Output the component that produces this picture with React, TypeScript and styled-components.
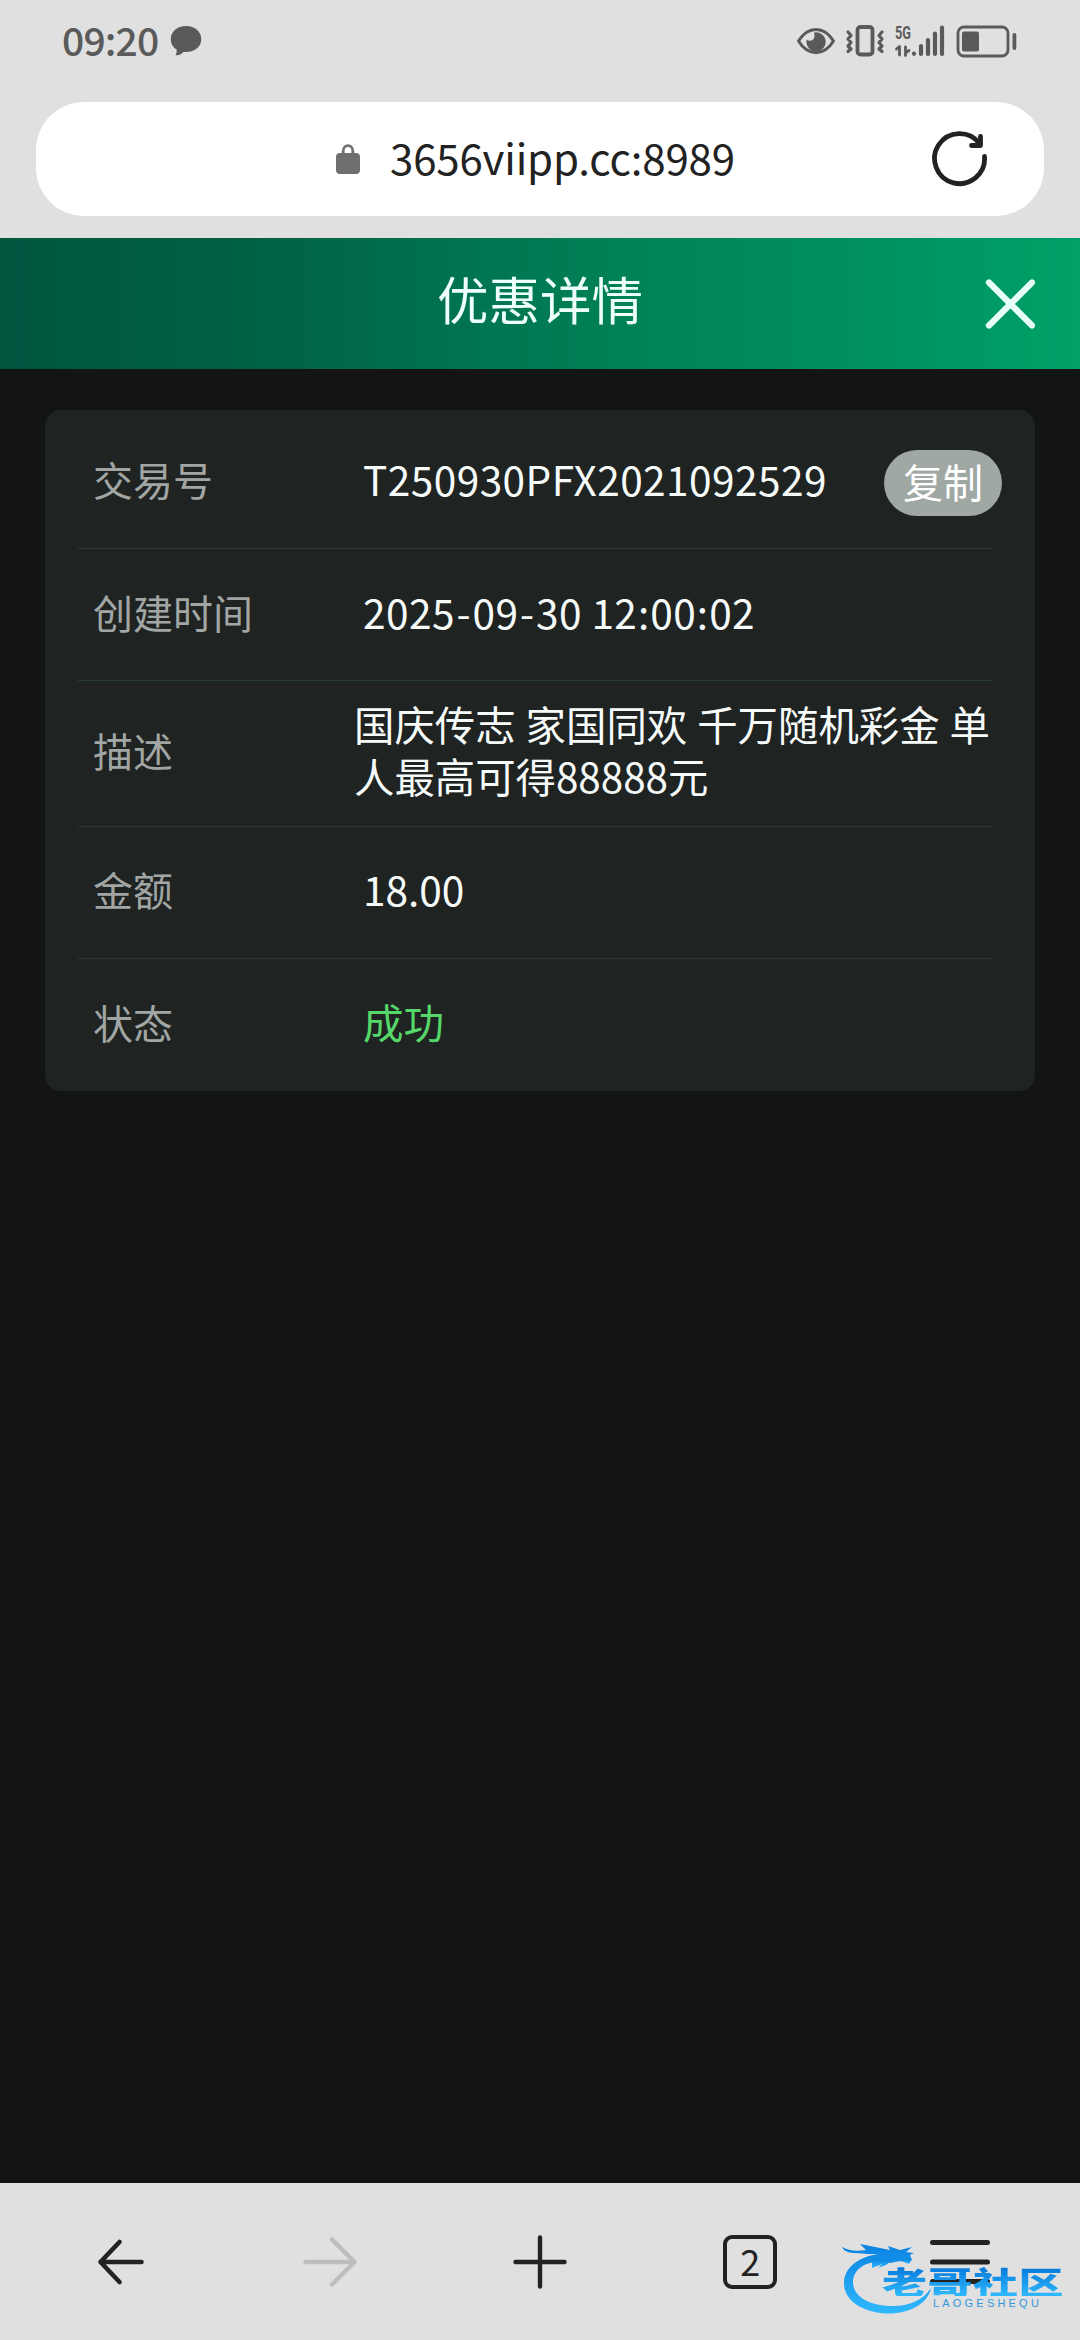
import React from "react";
import styled, { createGlobalStyle } from "styled-components";

const Global = createGlobalStyle`
  * { box-sizing: border-box; }
  html, body { margin: 0; padding: 0; background: #131512; }
  body, button { font-family: "Noto Sans CJK SC", "Noto Sans", sans-serif; }
`;

const Screen = styled.div`
  position: relative;
  width: 1080px;
  height: 2340px;
  display: flex;
  flex-direction: column;
  background: #131512;
  overflow: hidden;
`;

const BrowserTop = styled.header`
  height: 238px;
  flex: none;
  background: #e0e0e0;
  display: flex;
  flex-direction: column;
`;

const StatusBar = styled.div`
  height: 102px;
  padding: 0 62px 0 62px;
  display: flex;
  justify-content: space-between;
  align-items: flex-start;
`;

const ClockGroup = styled.div`
  display: flex;
  align-items: center;
  height: 82px;
  gap: 12px;
`;

const Clock = styled.span`
  padding-bottom: 4px;
  font-size: 39px;
  line-height: 78px;
  letter-spacing: -0.85px;
  color: #5a5a5a;
  font-weight: 500;
`;

const StatusIcons = styled.div`
  display: flex;
  height: 82px;
  align-items: center;
`;

const AddressBar = styled.div`
  height: 114px;
  margin: 0 36px;
  padding: 0 55px 0 300px;
  border-radius: 48px;
  background: #fff;
  display: flex;
  align-items: center;
`;

const Url = styled.span`
  flex: 1;
  margin-left: 30px;
  padding-bottom: 4px;
  font-size: 42px;
  line-height: 60px;
  letter-spacing: -0.17px;
  color: #222;
`;

const TitleBar = styled.div`
  height: 131px;
  flex: none;
  display: grid;
  grid-template-columns: 1fr auto 1fr;
  align-items: center;
  padding: 0 45px;
  background: linear-gradient(90deg, #00553f 0%, #006446 27%, #007e56 54%, #00a067 100%);
`;

const Title = styled.h1`
  grid-column: 2;
  margin: 0;
  font-size: 51.5px;
  line-height: 76px;
  font-weight: 400;
  color: #ecfffa;
  padding-bottom: 11px;
`;

const CloseButton = styled.button`
  justify-self: end;
  display: flex;
  border: 0;
  padding: 0;
  background: none;
`;

const Content = styled.main`
  flex: 1;
  padding: 41px 45px 0;
`;

const Card = styled.section`
  border-radius: 16px;
  background: #1f2322;
  padding: 0 42px 0 33px;
`;

const Row = styled.div<{ $height: number; $lift?: number; $last?: boolean }>`
  height: ${(p) => p.$height}px;
  display: grid;
  grid-template-columns: 254px 1fr;
  align-items: center;
  padding: 0 0 ${(p) => p.$lift || 0}px 15px;
  border-bottom: ${(p) => (p.$last ? "0" : "1px solid #25393e")};
`;

const Label = styled.span`
  font-size: 40px;
  line-height: 54px;
  color: #a1a6a4;
`;

const Value = styled.div<{ $color?: string }>`
  display: flex;
  align-items: center;
  padding-left: 16px;
  font-size: 40.6px;
  line-height: 54px;
  white-space: nowrap;
  color: ${(p) => p.$color || "#f6fbfa"};
`;

const Code = styled.span`
  letter-spacing: 0.45px;
`;

const Mark = styled.span<{ $pad: number }>`
  padding: 0 ${(p) => p.$pad}px;
`;

const Description = styled.p`
  margin: 0;
  padding-left: 7px;
  font-size: 40.4px;
  line-height: 52px;
  word-spacing: 1px;
  color: #f6fbfa;
  white-space: pre;
`;

const CopyButton = styled.button`
  margin: 7px -9px 0 auto;
  width: 118px;
  height: 66px;
  padding: 0 0 4px;
  border: 0;
  border-radius: 33px;
  background: #9fa8a3;
  color: #fff;
  font-size: 40px;
  line-height: 58px;
`;

const Toolbar = styled.nav`
  height: 157px;
  flex: none;
  background: #e0e0e0;
  display: grid;
  grid-template-columns: repeat(5, 210.2px);
  justify-content: center;
  align-items: center;
`;

const Tool = styled.button`
  border: 0;
  padding: 0;
  background: none;
  display: flex;
  justify-content: center;
  align-items: center;
`;

const TabCount = styled.span`
  width: 54px;
  height: 54px;
  padding-bottom: 4px;
  border: 4.5px solid #222;
  border-radius: 9px;
  display: flex;
  align-items: center;
  justify-content: center;
  font-size: 36px;
  line-height: 42px;
  color: #222;
`;

const Watermark = styled.div`
  position: absolute;
  left: 840px;
  top: 2240px;
  width: 240px;
  height: 80px;
`;

const WatermarkName = styled.span`
  position: absolute;
  left: 42px;
  top: 25px;
  font-size: 31px;
  line-height: 31px;
  font-weight: 900;
  letter-spacing: 0.4px;
  white-space: nowrap;
  transform: scaleX(1.45);
  transform-origin: 0 0;
  color: transparent;
  background: linear-gradient(180deg, #087bdc 10%, #2db6fb 95%);
  -webkit-background-clip: text;
  background-clip: text;
`;

const WatermarkLatin = styled.span`
  position: absolute;
  left: 93px;
  top: 57px;
  font-family: "Liberation Sans", Arial, sans-serif;
  font-size: 11px;
  line-height: 12px;
  letter-spacing: 3.2px;
  color: #3295dc;
  white-space: nowrap;
`;

const Line = styled.path`
  fill: none;
  stroke-linecap: round;
  stroke-linejoin: round;
`;

const ChatIcon = () => (
  <svg width="32" height="30" viewBox="0 0 32 30">
    <path fill="#5a5a5a" d="M16 0C7 0 .8 5.700.8 13c0 4.700 2.300 8.500 6 10.800C7 26 6.200 28 5.600 29.200c3 .4 5.800-1.200 8-3.300C24.500 26.800 31.300 21 31.300 13 31.300 5.700 25 0 16 0z" />
  </svg>
);

const StatusGlyphs = () => (
  <svg width="222" height="34" viewBox="796 23 222 34" fill="#5a5a5a">
    <Line d="M798.500 40C808 24.500 824 24.500 833.500 40C824 55.500 808 55.500 798.500 40Z" stroke="#5a5a5a" strokeWidth="3" />
    <path d="M814 31.500a9.600 9.600 0 1 1-7.200 7c3.500 3 9.500 .5 7.200-7z" />
    <rect x="857.500" y="26" width="15" height="27.500" rx="3" fill="none" stroke="#5a5a5a" strokeWidth="3.800" />
    <Line d="M848 31l3 3.500-3 3.500 3 3.500-3 3.500 3 3-3 2.500M882 31l-3 3.500 3 3.500-3 3.500 3 3.500-3 3 3 2.500" stroke="#5a5a5a" strokeWidth="3.200" />
    <text x="895" y="37.500" fontFamily="Roboto, sans-serif" fontWeight="700" fontSize="17.500" textLength="16" lengthAdjust="spacingAndGlyphs">5G</text>
    <Line d="M896.500 48l3-2.500v8.500M905.500 46v8.500M906 51.500l3-2" stroke="#5a5a5a" strokeWidth="2.800" />
    <Line d="M914 52.500v.3M921 45v8M928 39v14M935 32.500v20.500M942 26.500v26.500" stroke="#5a5a5a" strokeWidth="4.200" />
    <rect x="958" y="26" width="50" height="29" rx="6" fill="none" stroke="#5a5a5a" strokeWidth="2.800" />
    <rect x="962" y="30.500" width="17" height="20" rx="2" />
    <rect x="1012.500" y="32" width="3.800" height="17" rx="1.900" />
  </svg>
);

const LockIcon = () => (
  <svg width="24" height="30" viewBox="0 0 24 30">
    <rect x="0" y="9" width="24" height="21" rx="4" fill="#6f6f6f" />
    <path d="M7.200 11V7a4.800 5.300 0 0 1 9.600 0v4" fill="none" stroke="#6f6f6f" strokeWidth="2.800" />
  </svg>
);

const ReloadIcon = () => (
  <svg width="58" height="58" viewBox="931 130 58 58">
    <Line d="M984.500 156.500A25 25 0 1 1 979.500 143.500" stroke="#222" strokeWidth="4.800" />
    <Line d="M980.500 136.500v9h-9" stroke="#222" strokeWidth="4.800" />
  </svg>
);

const CloseIcon = () => (
  <svg width="50" height="50" viewBox="0 0 50 50">
    <Line d="M4 3.500l43 43M47 3.500l-43 43" stroke="#e8fff7" strokeWidth="6.200" />
  </svg>
);

const DragonMark = () => (
  <svg width="100" height="80" viewBox="0 0 100 80">
    <defs>
      <linearGradient id="dragon" x1="0" y1="0" x2="0" y2="1">
        <stop offset="0" stopColor="#0b83e2" />
        <stop offset="1" stopColor="#2fb8fc" />
      </linearGradient>
    </defs>
    <g fill="url(#dragon)">
      <path d="M38 14C18 17 4 28 4 43C4 62 25 73.500 49 73.500C69 73.500 88 64 91 48C83 60 70 66 52 66C32 66 13 58 13 42C13 31 23 23 36 22C42 22 48 24 55 22C62 20 66 22 72 20L70 15L74 13L66 12L72 7L60 10L48 6L50 10L40 8L20 4L26 10C15 12 8 10 2 7C4 11 8 13 16 13L28 14Z" />
      <path d="M32 19L52 20L46 25L38 28L42 24L32 28Z" />
      <path d="M54 20L72 19L69 24L64 22Z" />
    </g>
  </svg>
);

export default function App() {
  return (
    <Screen>
      <Global />
      <BrowserTop>
        <StatusBar>
          <ClockGroup>
            <Clock>09:20</Clock>
            <ChatIcon />
          </ClockGroup>
          <StatusIcons>
            <StatusGlyphs />
          </StatusIcons>
        </StatusBar>
        <AddressBar>
          <LockIcon />
          <Url>3656viipp.cc:8989</Url>
          <ReloadIcon />
        </AddressBar>
      </BrowserTop>
      <TitleBar>
        <Title>优惠详情</Title>
        <CloseButton aria-label="关闭">
          <CloseIcon />
        </CloseButton>
      </TitleBar>
      <Content>
        <Card>
          <Row $height={139}>
            <Label>交易号</Label>
            <Value>
              <Code>T250930PFX2021092529</Code>
              <CopyButton>复制</CopyButton>
            </Value>
          </Row>
          <Row $height={132} $lift={6}>
            <Label>创建时间</Label>
            <Value>
              <Code>
                2025<Mark $pad={1.5}>-</Mark>09<Mark $pad={1.5}>-</Mark>30 12<Mark $pad={0.6}>:</Mark>00
                <Mark $pad={0.6}>:</Mark>02
              </Code>
            </Value>
          </Row>
          <Row $height={146} $lift={7}>
            <Label>描述</Label>
            <Description>{"国庆传志 家国同欢 千万随机彩金 单\n人最高可得88888元"}</Description>
          </Row>
          <Row $height={132} $lift={7}>
            <Label>金额</Label>
            <Value>18.00</Value>
          </Row>
          <Row $height={132} $lift={6} $last>
            <Label>状态</Label>
            <Value $color="#55d869">成功</Value>
          </Row>
        </Card>
      </Content>
      <Toolbar>
        <Tool aria-label="后退">
          <svg width="50" height="50" viewBox="0 0 50 50">
            <Line d="M5.500 25h41M24.500 5L5.500 25L24.500 45" stroke="#222" strokeWidth="4.600" />
          </svg>
        </Tool>
        <Tool aria-label="前进">
          <svg width="56" height="50" viewBox="0 0 56 50">
            <Line d="M3.500 25h49M30 2.500L52.500 25L30 47.500" stroke="#bdbdbd" strokeWidth="4.400" />
          </svg>
        </Tool>
        <Tool aria-label="新建">
          <svg width="54" height="54" viewBox="0 0 54 54">
            <Line d="M2.500 27h49M27 2.500v49" stroke="#222" strokeWidth="4.400" />
          </svg>
        </Tool>
        <Tool aria-label="标签页">
          <TabCount>2</TabCount>
        </Tool>
        <Tool aria-label="菜单">
          <svg width="60" height="46" viewBox="0 0 60 46">
            <Line d="M2.500 3.500h55M2.500 23h55M2.500 42.500h55" stroke="#222" strokeWidth="5" />
          </svg>
        </Tool>
      </Toolbar>
      <Watermark>
        <DragonMark />
        <WatermarkName>老哥社区</WatermarkName>
        <WatermarkLatin>LAOGESHEQU</WatermarkLatin>
      </Watermark>
    </Screen>
  );
}
